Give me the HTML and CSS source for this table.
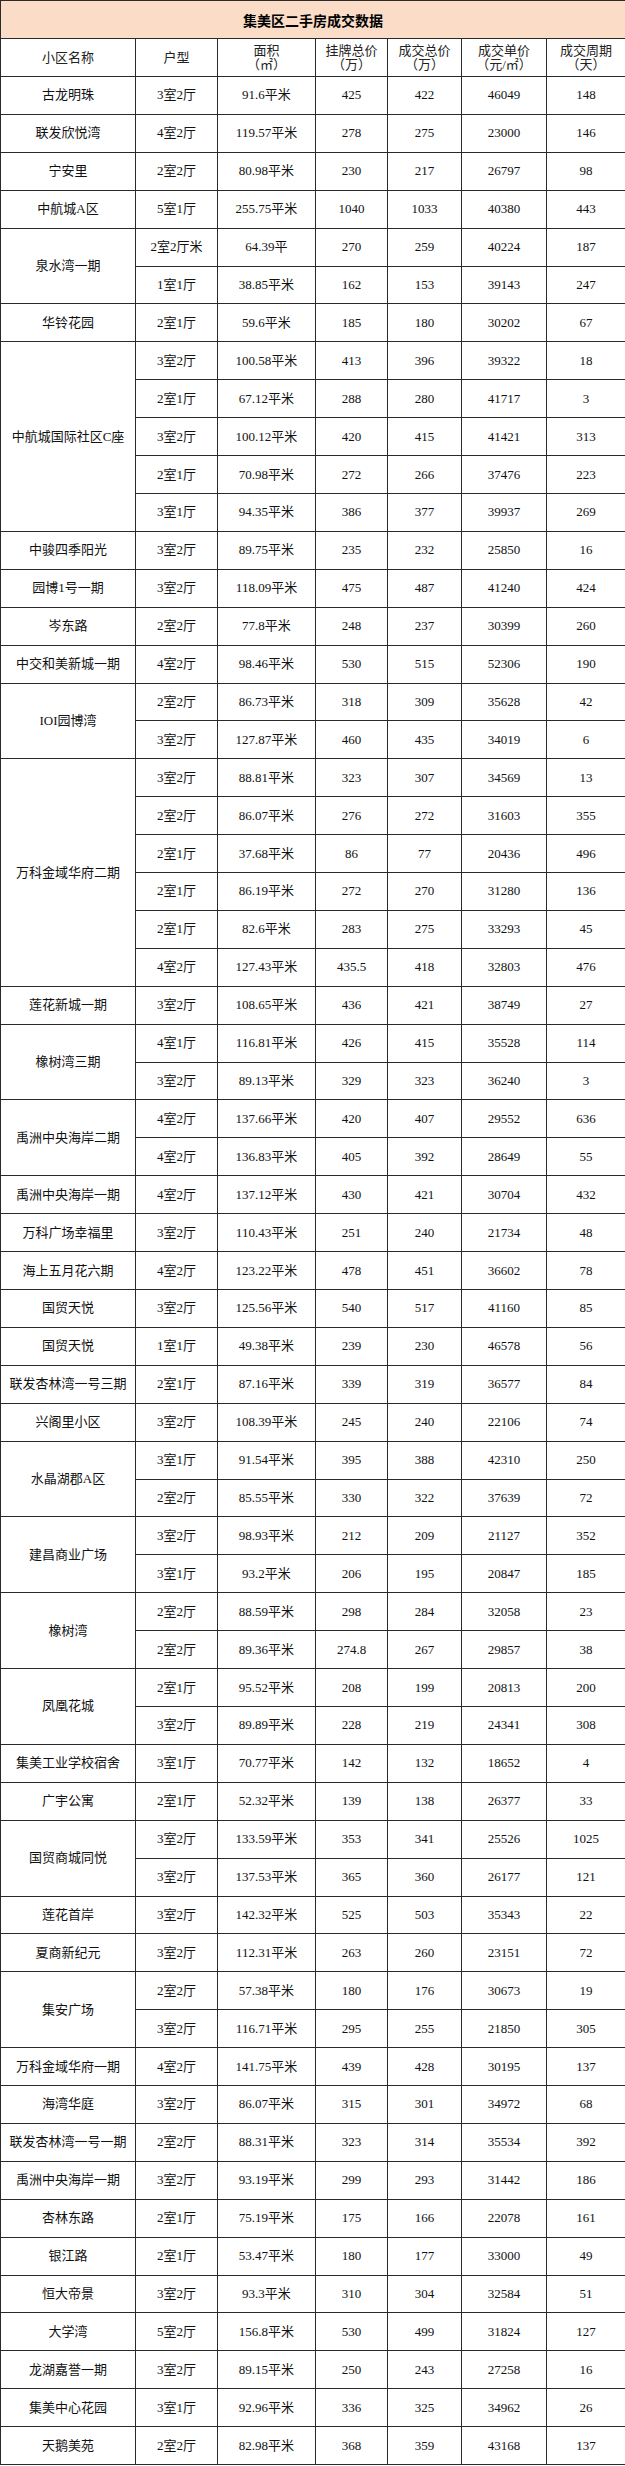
FILE: index.html
```html
<!DOCTYPE html>
<html lang="zh-CN">
<head>
<meta charset="utf-8">
<title>集美区二手房成交数据</title>
<link rel="stylesheet" href="styles.css">
</head>
<body>
<table class="sheet">
<colgroup>
<col class="c-name"><col class="c-type"><col class="c-area"><col class="c-list"><col class="c-deal"><col class="c-unit"><col class="c-days">
</colgroup>
<thead>
<tr class="title"><th colspan="7">集美区二手房成交数据</th></tr>
<tr class="head">
<th>小区名称</th>
<th>户型</th>
<th><span class="ln">面积</span><span class="ln">（㎡）</span></th>
<th><span class="ln">挂牌总价</span><span class="ln">（万）</span></th>
<th><span class="ln">成交总价</span><span class="ln">（万）</span></th>
<th><span class="ln">成交单价</span><span class="ln">（元/㎡）</span></th>
<th><span class="ln">成交周期</span><span class="ln">（天）</span></th>
</tr>
</thead>
<tbody>
<tr><td>古龙明珠</td><td>3室2厅</td><td>91.6平米</td><td>425</td><td>422</td><td>46049</td><td>148</td></tr>
<tr><td>联发欣悦湾</td><td>4室2厅</td><td>119.57平米</td><td>278</td><td>275</td><td>23000</td><td>146</td></tr>
<tr><td>宁安里</td><td>2室2厅</td><td>80.98平米</td><td>230</td><td>217</td><td>26797</td><td>98</td></tr>
<tr><td>中航城A区</td><td>5室1厅</td><td>255.75平米</td><td>1040</td><td>1033</td><td>40380</td><td>443</td></tr>
<tr><td rowspan="2">泉水湾一期</td><td>2室2厅米</td><td>64.39平</td><td>270</td><td>259</td><td>40224</td><td>187</td></tr>
<tr><td>1室1厅</td><td>38.85平米</td><td>162</td><td>153</td><td>39143</td><td>247</td></tr>
<tr><td>华铃花园</td><td>2室1厅</td><td>59.6平米</td><td>185</td><td>180</td><td>30202</td><td>67</td></tr>
<tr><td rowspan="5">中航城国际社区C座</td><td>3室2厅</td><td>100.58平米</td><td>413</td><td>396</td><td>39322</td><td>18</td></tr>
<tr><td>2室1厅</td><td>67.12平米</td><td>288</td><td>280</td><td>41717</td><td>3</td></tr>
<tr><td>3室2厅</td><td>100.12平米</td><td>420</td><td>415</td><td>41421</td><td>313</td></tr>
<tr><td>2室1厅</td><td>70.98平米</td><td>272</td><td>266</td><td>37476</td><td>223</td></tr>
<tr><td>3室1厅</td><td>94.35平米</td><td>386</td><td>377</td><td>39937</td><td>269</td></tr>
<tr><td>中骏四季阳光</td><td>3室2厅</td><td>89.75平米</td><td>235</td><td>232</td><td>25850</td><td>16</td></tr>
<tr><td>园博1号一期</td><td>3室2厅</td><td>118.09平米</td><td>475</td><td>487</td><td>41240</td><td>424</td></tr>
<tr><td>岑东路</td><td>2室2厅</td><td>77.8平米</td><td>248</td><td>237</td><td>30399</td><td>260</td></tr>
<tr><td>中交和美新城一期</td><td>4室2厅</td><td>98.46平米</td><td>530</td><td>515</td><td>52306</td><td>190</td></tr>
<tr><td rowspan="2">IOI园博湾</td><td>2室2厅</td><td>86.73平米</td><td>318</td><td>309</td><td>35628</td><td>42</td></tr>
<tr><td>3室2厅</td><td>127.87平米</td><td>460</td><td>435</td><td>34019</td><td>6</td></tr>
<tr><td rowspan="6">万科金域华府二期</td><td>3室2厅</td><td>88.81平米</td><td>323</td><td>307</td><td>34569</td><td>13</td></tr>
<tr><td>2室2厅</td><td>86.07平米</td><td>276</td><td>272</td><td>31603</td><td>355</td></tr>
<tr><td>2室1厅</td><td>37.68平米</td><td>86</td><td>77</td><td>20436</td><td>496</td></tr>
<tr><td>2室1厅</td><td>86.19平米</td><td>272</td><td>270</td><td>31280</td><td>136</td></tr>
<tr><td>2室1厅</td><td>82.6平米</td><td>283</td><td>275</td><td>33293</td><td>45</td></tr>
<tr><td>4室2厅</td><td>127.43平米</td><td>435.5</td><td>418</td><td>32803</td><td>476</td></tr>
<tr><td>莲花新城一期</td><td>3室2厅</td><td>108.65平米</td><td>436</td><td>421</td><td>38749</td><td>27</td></tr>
<tr><td rowspan="2">橡树湾三期</td><td>4室1厅</td><td>116.81平米</td><td>426</td><td>415</td><td>35528</td><td>114</td></tr>
<tr><td>3室2厅</td><td>89.13平米</td><td>329</td><td>323</td><td>36240</td><td>3</td></tr>
<tr><td rowspan="2">禹洲中央海岸二期</td><td>4室2厅</td><td>137.66平米</td><td>420</td><td>407</td><td>29552</td><td>636</td></tr>
<tr><td>4室2厅</td><td>136.83平米</td><td>405</td><td>392</td><td>28649</td><td>55</td></tr>
<tr><td>禹洲中央海岸一期</td><td>4室2厅</td><td>137.12平米</td><td>430</td><td>421</td><td>30704</td><td>432</td></tr>
<tr><td>万科广场幸福里</td><td>3室2厅</td><td>110.43平米</td><td>251</td><td>240</td><td>21734</td><td>48</td></tr>
<tr><td>海上五月花六期</td><td>4室2厅</td><td>123.22平米</td><td>478</td><td>451</td><td>36602</td><td>78</td></tr>
<tr><td>国贸天悦</td><td>3室2厅</td><td>125.56平米</td><td>540</td><td>517</td><td>41160</td><td>85</td></tr>
<tr><td>国贸天悦</td><td>1室1厅</td><td>49.38平米</td><td>239</td><td>230</td><td>46578</td><td>56</td></tr>
<tr><td>联发杏林湾一号三期</td><td>2室1厅</td><td>87.16平米</td><td>339</td><td>319</td><td>36577</td><td>84</td></tr>
<tr><td>兴阁里小区</td><td>3室2厅</td><td>108.39平米</td><td>245</td><td>240</td><td>22106</td><td>74</td></tr>
<tr><td rowspan="2">水晶湖郡A区</td><td>3室1厅</td><td>91.54平米</td><td>395</td><td>388</td><td>42310</td><td>250</td></tr>
<tr><td>2室2厅</td><td>85.55平米</td><td>330</td><td>322</td><td>37639</td><td>72</td></tr>
<tr><td rowspan="2">建昌商业广场</td><td>3室2厅</td><td>98.93平米</td><td>212</td><td>209</td><td>21127</td><td>352</td></tr>
<tr><td>3室1厅</td><td>93.2平米</td><td>206</td><td>195</td><td>20847</td><td>185</td></tr>
<tr><td rowspan="2">橡树湾</td><td>2室2厅</td><td>88.59平米</td><td>298</td><td>284</td><td>32058</td><td>23</td></tr>
<tr><td>2室2厅</td><td>89.36平米</td><td>274.8</td><td>267</td><td>29857</td><td>38</td></tr>
<tr><td rowspan="2">凤凰花城</td><td>2室1厅</td><td>95.52平米</td><td>208</td><td>199</td><td>20813</td><td>200</td></tr>
<tr><td>3室2厅</td><td>89.89平米</td><td>228</td><td>219</td><td>24341</td><td>308</td></tr>
<tr><td>集美工业学校宿舍</td><td>3室1厅</td><td>70.77平米</td><td>142</td><td>132</td><td>18652</td><td>4</td></tr>
<tr><td>广宇公寓</td><td>2室1厅</td><td>52.32平米</td><td>139</td><td>138</td><td>26377</td><td>33</td></tr>
<tr><td rowspan="2">国贸商城同悦</td><td>3室2厅</td><td>133.59平米</td><td>353</td><td>341</td><td>25526</td><td>1025</td></tr>
<tr><td>3室2厅</td><td>137.53平米</td><td>365</td><td>360</td><td>26177</td><td>121</td></tr>
<tr><td>莲花首岸</td><td>3室2厅</td><td>142.32平米</td><td>525</td><td>503</td><td>35343</td><td>22</td></tr>
<tr><td>夏商新纪元</td><td>3室2厅</td><td>112.31平米</td><td>263</td><td>260</td><td>23151</td><td>72</td></tr>
<tr><td rowspan="2">集安广场</td><td>2室2厅</td><td>57.38平米</td><td>180</td><td>176</td><td>30673</td><td>19</td></tr>
<tr><td>3室2厅</td><td>116.71平米</td><td>295</td><td>255</td><td>21850</td><td>305</td></tr>
<tr><td>万科金域华府一期</td><td>4室2厅</td><td>141.75平米</td><td>439</td><td>428</td><td>30195</td><td>137</td></tr>
<tr><td>海湾华庭</td><td>3室2厅</td><td>86.07平米</td><td>315</td><td>301</td><td>34972</td><td>68</td></tr>
<tr><td>联发杏林湾一号一期</td><td>2室2厅</td><td>88.31平米</td><td>323</td><td>314</td><td>35534</td><td>392</td></tr>
<tr><td>禹洲中央海岸一期</td><td>3室2厅</td><td>93.19平米</td><td>299</td><td>293</td><td>31442</td><td>186</td></tr>
<tr><td>杏林东路</td><td>2室1厅</td><td>75.19平米</td><td>175</td><td>166</td><td>22078</td><td>161</td></tr>
<tr><td>银江路</td><td>2室1厅</td><td>53.47平米</td><td>180</td><td>177</td><td>33000</td><td>49</td></tr>
<tr><td>恒大帝景</td><td>3室2厅</td><td>93.3平米</td><td>310</td><td>304</td><td>32584</td><td>51</td></tr>
<tr><td>大学湾</td><td>5室2厅</td><td>156.8平米</td><td>530</td><td>499</td><td>31824</td><td>127</td></tr>
<tr><td>龙湖嘉誉一期</td><td>3室2厅</td><td>89.15平米</td><td>250</td><td>243</td><td>27258</td><td>16</td></tr>
<tr><td>集美中心花园</td><td>3室1厅</td><td>92.96平米</td><td>336</td><td>325</td><td>34962</td><td>26</td></tr>
<tr><td>天鹅美苑</td><td>2室2厅</td><td>82.98平米</td><td>368</td><td>359</td><td>43168</td><td>137</td></tr>
</tbody>
</table>
</body>
</html>
```

FILE: styles.css
```css
html, body {
  margin: 0;
  padding: 0;
  background: #ffffff;
}

body {
  font-family: "Liberation Serif", "Noto Sans CJK SC", serif;
}

.sheet {
  width: 625px;
  border-collapse: collapse;
  table-layout: fixed;
  color: #111111;
  font-size: 13px;
}

.c-name { width: 135px; }
.c-type { width: 82px; }
.c-area { width: 98px; }
.c-list { width: 72px; }
.c-deal { width: 74px; }
.c-unit { width: 85px; }
.c-days { width: 79px; }

.sheet th,
.sheet td {
  border: 1px solid #2a2a2a;
  padding: 0 1px;
  text-align: center;
  vertical-align: middle;
  white-space: nowrap;
  line-height: 14px;
  font-weight: normal;
}

.sheet .title {
  height: 38px;
}

.sheet .title th {
  background: #fbdcc6;
  font-family: "Noto Sans CJK SC", sans-serif;
  font-weight: 700;
  font-size: 14px;
  color: #000000;
}

.sheet .head {
  height: 38px;
}

.sheet .head th {
  color: #222222;
}

.ln {
  display: block;
}

.sheet tbody tr {
  height: 37.92px;
}
```
